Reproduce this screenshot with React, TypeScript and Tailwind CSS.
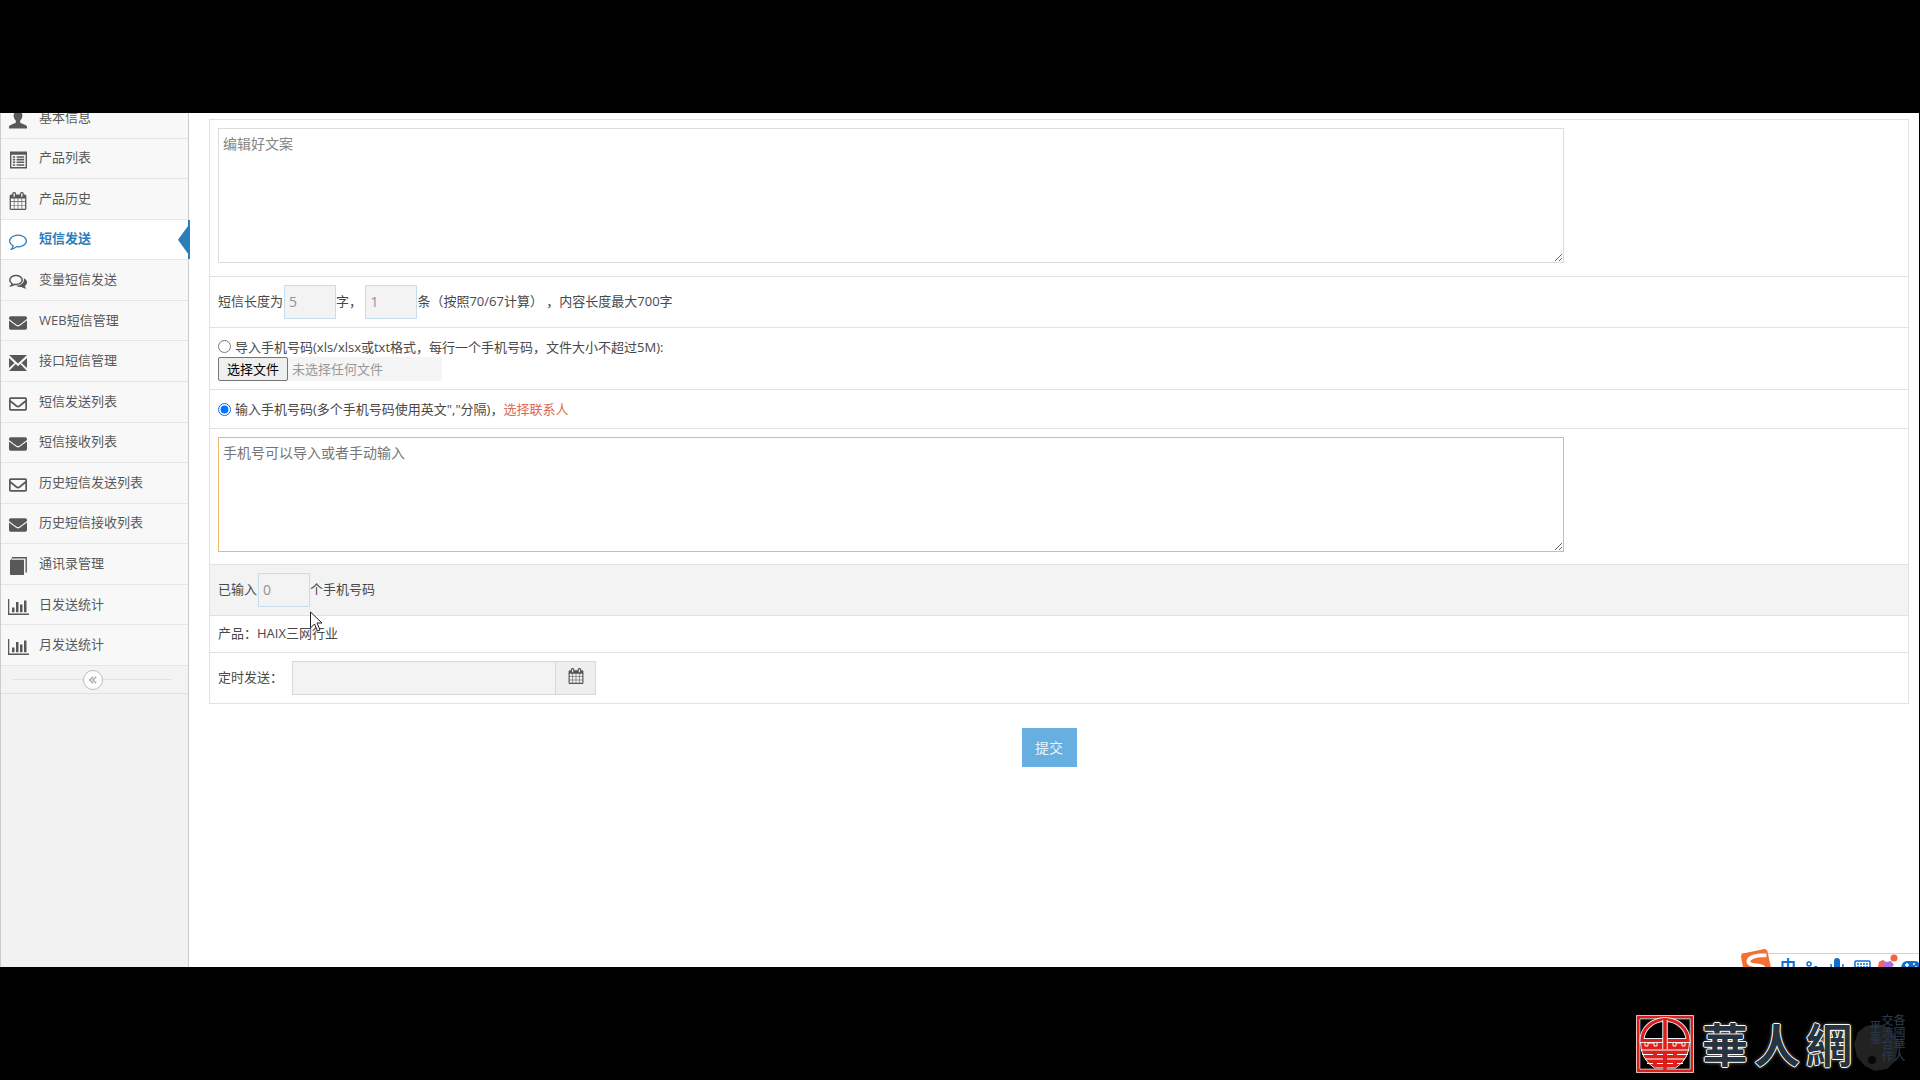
import React, { useRef, useState } from 'react'
import clsx from 'clsx'
import { FaEnvelope, FaRegEnvelope } from 'react-icons/fa'

interface IconProps {
  className?: string
}

interface MenuItem {
  label: string
  icon: React.ReactNode
}

/* ---------- Icons ---------- */

function UserIcon({ className }: IconProps) {
  return (
    <svg viewBox="0 0 18 18" className={className} fill="currentColor">
      <path d="M9 0C6.3 0 4.600 2 4.600 4.600c0 2.300 1 3.900 2.200 5v2.100L1.600 14C.6 14.500 0 15 0 16.200V17.500h18v-1.300c0-1.200-.6-1.700-1.600-2.200l-5.200-2.300V9.600c1.200-1.100 2.200-2.700 2.200-5C13.400 2 11.700 0 9 0z" />
    </svg>
  )
}

function ListIcon({ className }: IconProps) {
  return (
    <svg viewBox="0 0 18 18" className={className} fill="currentColor">
      <path fillRule="evenodd" d="M0 0h18v18H0zM1.500 3.500v13h15v-13z" />
      <path d="M3 5h2.500v1.700H3zM7 5h8v1.700H7zM3 7.800h2.500v1.700H3zM7 7.800h8v1.700H7zM3 10.600h2.500v1.700H3zM7 10.600h8v1.700H7zM3 13.400h2.500V15H3zM7 13.400h8V15H7z" />
    </svg>
  )
}

function CalendarIcon({ className }: IconProps) {
  return (
    <svg viewBox="0 0 1792 1792" className={className} fill="currentColor">
      <path d="M192 1664h288v-288h-288v288zm352 0h320v-288h-320v288zm-352-352h288v-320h-288v320zm352 0h320v-320h-320v320zm-352-384h288v-288h-288v288zm736 736h320v-288h-320v288zm-384-736h320v-288h-320v288zm768 736h288v-288h-288v288zm-384-352h320v-320h-320v320zm-352-864v-288q0-13-9.500-22.500t-22.500-9.500h-64q-13 0-22.500 9.500t-9.500 22.500v288q0 13 9.500 22.500t22.500 9.500h64q13 0 22.500-9.500t9.500-22.500zm736 864h288v-320h-288v320zm-384-384h320v-288h-320v288zm384 0h288v-288h-288v288zm32-480v-288q0-13-9.500-22.500t-22.500-9.500h-64q-13 0-22.500 9.500t-9.500 22.500v288q0 13 9.500 22.500t22.500 9.500h64q13 0 22.500-9.500t9.500-22.500zm384-64v1280q0 52-38 90t-90 38h-1408q-52 0-90-38t-38-90v-1280q0-52 38-90t90-38h128v-96q0-66 47-113t113-47h64q66 0 113 47t47 113v96h384v-96q0-66 47-113t113-47h64q66 0 113 47t47 113v96h128q52 0 90 38t38 90z" />
    </svg>
  )
}

function CommentIcon({ className }: IconProps) {
  return (
    <svg viewBox="0 0 1792 1792" className={className} fill="currentColor">
      <path d="M896 384q-204 0-381.500 69.500t-282 187.500-104.500 255q0 112 71.500 213.500t201.500 175.500l87 50-27 96q-24 91-70 172 152-63 275-171l43-38 57 6q69 8 130 8 204 0 381.500-69.500t282-187.500 104.500-255-104.500-255-282-187.500-381.500-69.500zm896 512q0 174-120 321.500t-326 233-450 85.500q-70 0-145-8-198 175-460 242-49 14-114 22h-5q-15 0-27-10.500t-16-27.500v-1q-3-4-.5-12t2-10 4.500-9.500l6-9 7-8.500 8-9q7-8 31-34.500t34.500-38 31-39.500 32.500-51 27-59 26-76q-157-89-247.500-220t-90.500-281q0-174 120-321.500t326-233 450-85.500 450 85.500 326 233 120 321.500z" />
    </svg>
  )
}

function CommentsIcon({ className }: IconProps) {
  return (
    <svg viewBox="0 0 18 18" className={className} fill="currentColor">
      <path
        d="M7 2.500c3.500 0 6.200 2 6.200 4.500s-2.700 4.500-6.200 4.500c-.6 0-1.200-.1-1.700-.2-.9.700-2 1.200-3.200 1.400.6-.7.900-1.300 1-2C1.700 9.900.8 8.500.8 7 .8 4.500 3.500 2.500 7 2.500z"
        fill="none"
        stroke="currentColor"
        strokeWidth="1.500"
      />
      <path d="M14.900 5.300c1.900.9 3.100 2.300 3.100 4.100 0 1.500-.9 2.800-2.300 3.700.2.900.8 1.700 1.700 2.400-1.700 0-3.300-.6-4.500-1.600-2.200.3-4.300-.2-5.900-1.200 4.600.1 8.600-2.400 7.900-7.400z" />
    </svg>
  )
}

function EnvelopeCrossIcon({ className }: IconProps) {
  return (
    <svg viewBox="0 0 18 16" className={className} fill="currentColor">
      <path d="M0 0h18L9 8.500zM0 3l5.500 5L0 13zM18 3v10l-5.500-5zM0 16l6.700-6.900L9 11.200l2.300-2.100L18 16z" />
    </svg>
  )
}

function BookIcon({ className }: IconProps) {
  return (
    <svg viewBox="0 0 18 18" className={className}>
      <path d="M3 .8h14.200v14.700" fill="none" stroke="currentColor" strokeWidth="1.400" />
      <path d="M2.500 2.800H15V18H2.500C1.500 18 1 17.500 1 16.500V3.500L3 1" fill="currentColor" />
    </svg>
  )
}

function BarChartIcon({ className }: IconProps) {
  return (
    <svg viewBox="0 0 21 16" className={className} fill="currentColor">
      <path d="M0 0h1.300v14.500H21V16H0zM4 8.500h2.500v4.700H4zM8 3h2.500v10.200H8zM12 5.500h2.500v7.700H12zM16 1.500h2.500v11.700H16z" />
    </svg>
  )
}

function SealIcon({ className }: IconProps) {
  return (
    <svg viewBox="0 0 58 58" className={className}>
      <path d="M.5.5h57v57H.5z" fill="#000" stroke="#e9e9e9" />
      <path d="M2 2h54v54H2z" fill="none" stroke="#dc1f1b" strokeWidth="2.400" />
      <path d="M3.800 3.800h50.400v50.400H3.800z" fill="none" stroke="#ddd" />
      <path d="M4.500 27h49q0 17-14 26h-21q-14-9-14-26z" fill="#dc1f1b" stroke="#eee" />
      <path d="M6 25.500a23 21 0 0 1 46 0z" fill="#000" stroke="#eee" strokeWidth="5" />
      <path d="M6 25.500a23 21 0 0 1 46 0z" fill="none" stroke="#dc1f1b" strokeWidth="3.200" />
      <path d="M29 5v29" stroke="#eee" strokeWidth="5.500" />
      <path d="M29 3v53" stroke="#dc1f1b" strokeWidth="3.500" />
      <path
        d="M5 35h48M6 39.500h11M21 39.500h6M31 39.500h6M41 39.500h11M9 44h18M31 44h18M11 48.500h6M21 48.500h6M31 48.500h6M41 48.500h6"
        stroke="#fff"
        strokeWidth="1.200"
      />
      <path d="M9 28v3h3v-3h6v3h3v-3M37 28v3h3v-3h6v3h3v-3" fill="none" stroke="#fff" />
    </svg>
  )
}

/* ---------- Sidebar ---------- */

const menuItems: MenuItem[] = [
  { label: '基本信息', icon: <UserIcon className="h-[18px] w-[18px]" /> },
  { label: '产品列表', icon: <ListIcon className="h-[18px] w-[17px]" /> },
  { label: '产品历史', icon: <CalendarIcon className="h-[18px] w-[18px]" /> },
  { label: '短信发送', icon: <CommentIcon className="h-[18px] w-[18px]" /> },
  { label: '变量短信发送', icon: <CommentsIcon className="h-[18px] w-[18px]" /> },
  { label: 'WEB短信管理', icon: <FaEnvelope className="h-[18px] w-[18px]" /> },
  { label: '接口短信管理', icon: <EnvelopeCrossIcon className="h-4 w-[18px]" /> },
  { label: '短信发送列表', icon: <FaRegEnvelope className="h-[18px] w-[18px]" /> },
  { label: '短信接收列表', icon: <FaEnvelope className="h-[18px] w-[18px]" /> },
  { label: '历史短信发送列表', icon: <FaRegEnvelope className="h-[18px] w-[18px]" /> },
  { label: '历史短信接收列表', icon: <FaEnvelope className="h-[18px] w-[18px]" /> },
  { label: '通讯录管理', icon: <BookIcon className="h-[18px] w-[18px]" /> },
  { label: '日发送统计', icon: <BarChartIcon className="h-4 w-[21px]" /> },
  { label: '月发送统计', icon: <BarChartIcon className="h-4 w-[21px]" /> },
]

function Sidebar() {
  const [active, setActive] = useState('短信发送')

  return (
    <aside className="w-[189px] shrink-0 border-x border-[#ccc] bg-[#f2f2f2]">
      {/* The list is scrolled a little, so its first entry is cut off */}
      <ul className="-mt-[15px] grid h-[568px] auto-rows-fr">
        {menuItems.map((item) => (
          <li key={item.label} className="relative border-b border-[#e5e5e5]">
            <a
              href="#"
              onClick={() => setActive(item.label)}
              className={clsx(
                'flex h-full items-center',
                item.label === active ? 'bg-white font-bold text-[#2b7dbc]' : 'bg-[#f8f8f8] text-[#585858]'
              )}
            >
              <span className="flex w-[34px] shrink-0 justify-center pt-1">{item.icon}</span>
              <span className="ml-1 pb-0.5">{item.label}</span>
            </a>
            {item.label === active && (
              <svg viewBox="0 0 12 40" className="absolute top-0 -right-0.5 h-full w-3" preserveAspectRatio="none">
                <path d="M12 0v40h-2v-6L0 20 10 6V0z" fill="#2b7dbc" />
              </svg>
            )}
          </li>
        ))}
      </ul>
      <div className="flex h-7 items-center border-b border-[#e0e0e0] bg-[#f3f3f3] pr-4 pl-3">
        <span className="h-px flex-1 bg-[#e0e0e0]" />
        <button
          aria-label="收起菜单"
          className="flex h-5 w-5 items-center justify-center rounded-full border border-[#bbb] bg-white text-[#aaa]"
        >
          <svg viewBox="0 0 10 10" className="h-2 w-2" fill="none" stroke="currentColor" strokeWidth="1.800">
            <path d="M5 1 1 5l4 4M9 1 5 5l4 4" />
          </svg>
        </button>
        <span className="h-px flex-1 bg-[#e0e0e0]" />
      </div>
    </aside>
  )
}

/* ---------- Form ---------- */

function CountBox({ value, label }: { value: string; label: string }) {
  return (
    <input
      readOnly
      aria-label={label}
      value={value}
      className="h-[34px] w-[52px] border border-[#c5dfec] bg-[#f3f3f3] px-1 pb-0.5 text-sm text-[#939192]"
    />
  )
}

function SmsForm() {
  const fileRef = useRef<HTMLInputElement>(null)
  const [source, setSource] = useState<'file' | 'manual'>('manual')

  return (
    <form className="min-w-0 flex-1 pt-1.5 pr-2.5 pl-5" onSubmit={(e) => e.preventDefault()}>
      <div className="divide-y divide-[#e2e2e2] border border-[#e2e2e2]">
        <div className="px-2 pt-2 pb-[13px]">
          <textarea
            aria-label="短信内容"
            defaultValue="编辑好文案"
            className="block h-[135px] w-4/5 border border-[#dcdcdc] px-1 py-[5px] text-sm text-[#858585] outline-none"
          />
        </div>

        <div className="flex items-start p-2 leading-8">
          <span className="mr-px">短信长度为</span>
          <CountBox value="5" label="短信字数" />
          字，&nbsp;
          <CountBox value="1" label="短信条数" />
          条（按照70/67计算） ，内容长度最大700字
        </div>

        <div className="p-2">
          <label className="flex h-[21px] items-center">
            <input
              type="radio"
              name="source"
              checked={source === 'file'}
              onChange={() => setSource('file')}
              className="mr-1 h-[13px] w-[13px]"
            />
            导入手机号码(xls/xlsx或txt格式，每行一个手机号码，文件大小不超过5M):
          </label>
          <div className="flex h-6 w-56 items-center bg-[#f5f5f5] text-[#999]">
            <input ref={fileRef} type="file" aria-label="手机号码文件" className="hidden" />
            <button
              type="button"
              onClick={() => fileRef.current?.click()}
              className="mr-1 h-6 w-[70px] rounded-xs border border-[#767676] bg-[#efefef] text-black"
            >
              选择文件
            </button>
            未选择任何文件
          </div>
        </div>

        <div className="flex h-[39px] items-center px-2">
          <label className="flex items-center">
            <input
              type="radio"
              name="source"
              checked={source === 'manual'}
              onChange={() => setSource('manual')}
              className="mr-1 h-[13px] w-[13px]"
            />
            输入手机号码(多个手机号码使用英文&quot;,&quot;分隔)，
          </label>
          <a href="#" className="text-[#dd6a55]">
            选择联系人
          </a>
        </div>

        <div className="px-2 pt-2 pb-3">
          <textarea
            aria-label="手机号码"
            defaultValue="手机号可以导入或者手动输入"
            className="block h-[115px] w-4/5 border border-[#f0b66f] px-1 py-[5px] text-sm text-[#757575] outline-none"
          />
        </div>

        <div className="flex items-start bg-[#f3f3f3] p-2 leading-8">
          <span className="mr-px">已输入</span>
          <CountBox value="0" label="手机号码数量" />
          个手机号码
        </div>

        <div className="px-2 pt-[7px] pb-[9px]">产品：HAIX三网行业</div>

        <div className="flex items-start p-2 leading-8">
          <label htmlFor="send-time" className="w-[74px]">
            定时发送：
          </label>
          <input id="send-time" readOnly className="h-[34px] w-[264px] border border-[#d8d8d8] bg-[#f3f3f3] px-1" />
          <button
            type="button"
            aria-label="选择时间"
            className="flex h-[34px] w-10 items-center justify-center border border-l-0 border-[#d8d8d8] bg-[#eee] pb-1 text-[#555]"
          >
            <CalendarIcon className="h-4 w-4" />
          </button>
        </div>
      </div>

      <div className="mt-6 flex justify-center pr-5">
        <button type="submit" className="h-[39px] w-[55px] bg-[#67aee1] text-sm text-[#e8f3fb]">
          提交
        </button>
      </div>
    </form>
  )
}

/* ---------- Overlays ---------- */

function ImeBar() {
  return (
    <div className="absolute right-0 -bottom-4 flex h-[30px] items-start border-t border-[#c9d2e6] bg-white text-[#1070d2]">
      <svg viewBox="0 0 34 30" className="-mt-1.5 h-[30px] w-8">
        <path d="M0 8Q0 6 2 5L25 0q2 0 3 2l6 28H4z" fill="#f56f32" />
        <path d="M27 7C17 6 7 9 8 14s15 2 16 6-8 6-17 5" fill="none" stroke="#fff" strokeWidth="4" />
      </svg>
      <span className="w-[30px] pt-0.5 text-center text-base leading-5 font-bold">中</span>
      <svg viewBox="0 0 116 24" className="mt-1 h-6 w-[116px] overflow-visible" fill="currentColor">
        <circle cx="6" cy="6" r="2" fill="none" stroke="currentColor" strokeWidth="1.500" />
        <path d="M11 8h3l2 4h-3z" />
        <rect x="31" y="0" width="6" height="12" rx="3" />
        <path d="M28 6q0 8 6 8t6-8M34 14v4" fill="none" stroke="currentColor" strokeWidth="1.500" />
        <rect x="52" y="3" width="15" height="12" rx="1" fill="none" stroke="currentColor" strokeWidth="1.500" />
        <path d="M54 6h11M54 9h11M54 12h11" stroke="currentColor" strokeDasharray="2 1" strokeWidth="1.500" />
        <path d="m76 4 4-2 3 2 5-1 3 4-3 3v10h-9V9l-4 2z" fill="#b06fe0" />
        <path d="m76 4 4-2 2 3-3 6-4-1z" fill="#f0656a" />
        <circle cx="91" cy="0" r="3.500" fill="#f4623a" />
        <path d="M104 3h8q5 0 6 7t-4 5l-3-3h-6l-3 3q-5 2-4-5t6-7z" />
        <path d="M102 7h4M104 5v4M110 6h2M112 9h2" stroke="#fff" strokeWidth="1.500" />
      </svg>
    </div>
  )
}

function Pointer() {
  return (
    <svg viewBox="0 0 13 21" className="pointer-events-none absolute top-[498px] left-[310px] h-[21px] w-[13px]">
      <path d="M.5 1v16l4-4 3 7 2.500-1-3-7H12z" fill="#fff" stroke="#222" strokeWidth="1" />
    </svg>
  )
}

function Watermark() {
  return (
    <div className="flex items-center gap-2 pr-4">
      <SealIcon className="h-[58px] w-[58px]" />
      <span className="flex gap-1.5 text-[46px] leading-[60px] font-bold text-[#263340] [text-shadow:1px_0_#fff,-1px_0_#fff,0_1px_#fff,0_-1px_#fff,0_0_4px_#aaa]">
        <span>華</span>
        <span>人</span>
        <span>網</span>
      </span>
      <div className="relative -ml-1.5 h-[60px] w-[50px]">
        <svg viewBox="0 0 50 60" className="absolute inset-0 h-full w-full">
          <path d="M4 18 12 12l12-2 10 3 7 8 3 12-3 14-8 8-12 2-10-5-8-9L0 30z" fill="#222" />
          <circle cx="18" cy="46" r="4" fill="#080808" />
        </svg>
        <p className="absolute inset-0 h-full w-full text-xs leading-3 font-medium text-[#273747] [writing-mode:vertical-rl]">
          各國華人
          <br />
          交流合作
          <br />
          <span className="pt-1.5">平臺</span>
        </p>
      </div>
    </div>
  )
}

export default function App() {
  return (
    <div className="flex h-screen flex-col bg-black font-['Open_Sans','Noto_Sans_CJK_SC',sans-serif] text-[13px] leading-5 text-[#484848] [text-spacing-trim:space-all]">
      <div className="h-[113px] shrink-0" />
      <main className="relative mr-px flex min-h-0 flex-1 overflow-hidden bg-white">
        <Sidebar />
        <SmsForm />
        <Pointer />
        <ImeBar />
      </main>
      <footer className="flex h-[113px] shrink-0 items-end justify-end pb-1.5">
        <Watermark />
      </footer>
    </div>
  )
}
